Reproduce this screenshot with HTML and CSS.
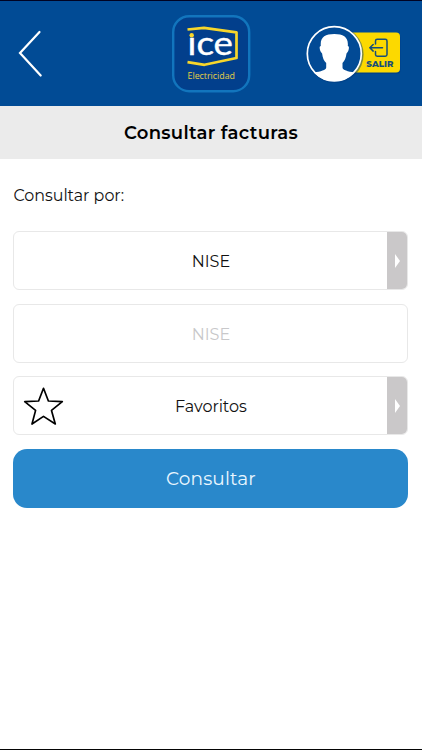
FILE: index.html
```html
<!DOCTYPE html>
<html lang="es">
<head>
<meta charset="utf-8">
<meta name="viewport" content="width=device-width, initial-scale=1">
<title>Consultar facturas</title>
<link rel="stylesheet" href="styles.css">
</head>
<body>
<div class="app">
  <header class="topbar">
    <button class="back" aria-label="Volver">
      <svg width="26" height="50" viewBox="0 0 26 50"><path d="M22.5 4 3 25 23.7 47.5" fill="none" stroke="#fff" stroke-width="2.2" stroke-linecap="round"/></svg>
    </button>
    <svg class="brand" width="80" height="80" viewBox="171 14 80 80" role="img" aria-label="ICE Electricidad">
      <rect x="173.2" y="16.2" width="76" height="75" rx="16" fill="#023f8c" stroke="#1275bd" stroke-width="2.4"/>
      <path d="M187.5 29.5 204 27.8 236.5 32.3V58L204.5 64.8 187.5 62.2" fill="none" stroke="#f7d62b" stroke-width="2.7" stroke-linejoin="round"/>
      <text class="brand-name" x="187.6" y="55.2" textLength="45.4" lengthAdjust="spacingAndGlyphs">ıce</text>
      <circle cx="191.7" cy="35.2" r="2.2" fill="#f7d62b"/>
      <text class="brand-sub" x="187.5" y="79" textLength="47.5" lengthAdjust="spacingAndGlyphs">Electricidad</text>
    </svg>
    <button class="logout" aria-label="Salir">
      <svg width="98" height="64" viewBox="304 22 98 64">
        <rect x="341" y="33.5" width="59.5" height="40.5" rx="4" fill="#003b82" opacity=".6"/>
        <rect x="341" y="32.5" width="59" height="40" rx="4" fill="#fcd900"/>
        <circle cx="335" cy="54.5" r="28.6" fill="#003b82" opacity=".5"/>
        <circle cx="334.3" cy="53.7" r="27" fill="#024a95" stroke="#fff" stroke-width="1.7"/>
        <path d="M320.8 46C320 37 325 34 334.3 34S348.6 37 347.8 46C350 46 348.7 52 346.5 53.5 346 58 344.5 61 342.5 63V67.5C342.5 70 348 71.5 354.5 72.5A27 27 0 0 1 314.1 72.5C320.6 71.5 326.2 70 326.2 67.5V63C324 61 322.6 58 322.1 53.5 319.9 52 318.6 46 320.8 46Z" fill="#fff"/>
        <path d="M375.5 44V41Q375.5 39.3 377.2 39.3H385.3Q387 39.3 387 41V54.5Q387 56.2 385.3 56.2H377.2Q375.5 56.2 375.5 54.5V51.5M382.5 47.8H370M373.2 44.5 369.8 47.8 373.2 51.1" fill="none" stroke="#174e78" stroke-width="1.5" stroke-linejoin="round" stroke-linecap="round"/>
        <text class="logout-label" x="366.3" y="66.6" textLength="27" lengthAdjust="spacingAndGlyphs">SALIR</text>
      </svg>
    </button>
  </header>
  <h1 class="title"><span>Consultar facturas</span></h1>
  <main class="form">
    <p class="prompt">Consultar por:</p>
    <button class="field select"><span class="value">NISE</span><span class="arrow"><svg width="5" height="14" viewBox="0 0 5 14"><path d="M0 0 5 7 0 14Z" fill="#fff"/></svg></span></button>
    <div class="field"><span class="value placeholder">NISE</span></div>
    <button class="field select">
      <svg class="star" width="42" height="40" viewBox="0 0 42 40"><path d="M20.5 2.3 25.4 15 39.3 15.7 28.5 24.4 32.3 38 20.5 30.4 9 38 12.6 24.4 1.7 15.7 15.6 15Z" fill="none" stroke="#000" stroke-width="1.7" stroke-linejoin="round"/></svg>
      <span class="value">Favoritos</span><span class="arrow"><svg width="5" height="14" viewBox="0 0 5 14"><path d="M0 0 5 7 0 14Z" fill="#fff"/></svg></span>
    </button>
    <button class="submit">Consultar</button>
  </main>
</div>
</body>
</html>
```
FILE: styles.css
```css
* { box-sizing: border-box; }
body { margin: 0; background: #fff; color: #111; font-family: Montserrat, Inter, sans-serif; }
button { font: inherit; color: inherit; margin: 0; padding: 0; border: 0; background: none; }
svg { display: block; }
.app { height: 750px; border-top: 1px solid #000323; border-bottom: 1px solid #050505; display: flex; flex-direction: column; overflow: hidden; }
.topbar { height: 105px; flex: none; display: grid; grid-template-columns: 1fr 80px 1fr; background: #014b95; }
.back { justify-self: start; margin: 27px 0 0 17px; height: 50px; }
.brand { margin-top: 13px; }
.logout { justify-self: end; margin: 21px 20px 0 0; height: 64px; }
.brand-name { font: 400 33px Lato, sans-serif; fill: #fff; stroke: #fff; stroke-width: .4px; }
.brand-sub { font: 400 9.8px "Open Sans", sans-serif; fill: #e5cf45; }
.logout-label { font: 800 9.3px Montserrat, Inter, sans-serif; fill: #174e78; }
.title { height: 53px; flex: none; margin: 0; display: flex; align-items: center; justify-content: center; background: #ebebeb; color: #000; font-size: 18px; font-weight: 600; letter-spacing: .3px; }
.form { display: flex; flex-direction: column; padding: 26px 13.6px 0 13.4px; }
.prompt { margin: 0 0 25px; padding-top: 1px; height: 21px; line-height: 20px; font-size: 15.9px; letter-spacing: 0; white-space: nowrap; }
.field { position: relative; height: 59px; width: 100%; margin-bottom: 13.5px; display: flex; align-items: center; justify-content: center; border: 1px solid #e8e8e8; border-radius: 6px; background: #fff; overflow: hidden; font-size: 16px; }
.value { padding-top: 2px; }
.arrow { position: absolute; right: -1px; top: -1px; bottom: -1px; width: 21.5px; display: flex; align-items: center; padding-left: 8px; background: #cac8c9; }
.placeholder { color: #c8c8ca; }
.star { position: absolute; left: 9px; top: 9px; }
.submit { height: 59px; border-radius: 14px; background: #2988cb; color: #e9f7ff; font-size: 18.5px; letter-spacing: .15px; }
```
